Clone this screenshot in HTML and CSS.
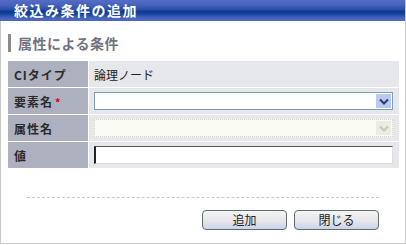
FILE: index.html
```html
<!DOCTYPE html>
<html lang="ja">
<head>
<meta charset="UTF-8">
<title>絞込み条件の追加</title>
<link rel="stylesheet" href="styles.css">
</head>
<body>
<div class="dialog">
  <div class="titlebar">絞込み条件の追加</div>
  <h2 class="section">属性による条件</h2>
  <table class="form">
    <tr><th>CIタイプ</th><td class="text">論理ノード</td></tr>
    <tr><th>要素名<span class="req">*</span></th>
      <td><div class="combo"><select></select><span class="arrow"><svg width="10" height="7" viewBox="0 0 10 7"><path d="M1 1.5 L5 5.5 L9 1.5" fill="none" stroke="#2c3c5c" stroke-width="2"/></svg></span></div></td></tr>
    <tr><th>属性名</th>
      <td><div class="combo disabled"><select disabled></select><span class="arrow"><svg width="10" height="7" viewBox="0 0 10 7"><path d="M1 1.5 L5 5.5 L9 1.5" fill="none" stroke="#c8c8b8" stroke-width="2"/></svg></span></div></td></tr>
    <tr><th>値</th><td><input class="value" type="text"></td></tr>
  </table>
  <div class="footer">
    <button class="btn">追加</button>
    <button class="btn">閉じる</button>
  </div>
</div>
</body>
</html>
```
FILE: styles.css
```css
body{margin:0;background:#fff;font-family:"Noto Sans CJK JP","Noto Sans",sans-serif;color:#222;}
.dialog{width:406px;height:244px;box-sizing:border-box;border:1px solid #c8c8c8;border-top:none;}
.titlebar{height:21px;margin:0 0 0 -1px;width:405px;background:linear-gradient(#566cc4 0,#4662bc 25%,#2a4ea8 45%,#0a3a8e 55%,#1a46a0 68%,#4664be 85%,#5068c2 100%);color:#fff;font-weight:bold;font-size:14px;line-height:21px;padding-left:14px;box-sizing:border-box;letter-spacing:1.5px;}
.section{margin:13px 0 0 7px;height:18px;border-left:3px solid #8a8a8a;padding-left:7px;font-size:14px;line-height:18px;font-weight:bold;color:#717180;letter-spacing:0.5px;}
.form{margin:8px 0 0 6px;border-collapse:collapse;width:393px;}
.form th,.form td{border:1px solid #fff;height:27px;padding:0;box-sizing:border-box;}
.form th{width:81px;background:#adb1bf;text-align:left;padding-left:6px;font-size:12px;font-weight:bold;color:#2a2a2a;letter-spacing:1px;}
.form td{background:#e6e7eb;padding:0 6px 0 5px;}
.form td.text{font-size:12px;color:#222;}
.req{color:#e00000;font-size:11px;margin-left:2px;}
.combo{display:flex;height:18px;border:1px solid #7f9db9;background:#fff;box-sizing:border-box;}
.combo select{flex:1;border:none;background:transparent;appearance:none;-webkit-appearance:none;outline:none;}
.combo .arrow{width:15px;margin:1px;background:#b8caf4;display:flex;align-items:center;justify-content:center;}
.combo.disabled{border:1px dotted #d8d4c0;background:#fbfbf6;}
.combo.disabled .arrow{background:#ecebe4;}
.value{display:block;width:100%;height:18px;box-sizing:border-box;border:1px solid #dcdcdc;border-top-color:#555;border-left:2px solid #222;background:#fff;outline:none;}
.footer{margin:28px 26px 0 26px;border-top:1px dashed #c8c8c8;padding-top:12px;display:flex;justify-content:flex-end;gap:7px;}
.btn{width:85px;height:20px;border:1px solid #5e6e6e;border-radius:4px;background:linear-gradient(#f4f4f4,#e4e4ea 60%,#c8d4ea);font-family:"Noto Sans CJK JP",sans-serif;font-size:12px;color:#222;padding:0;line-height:18px;}
```
